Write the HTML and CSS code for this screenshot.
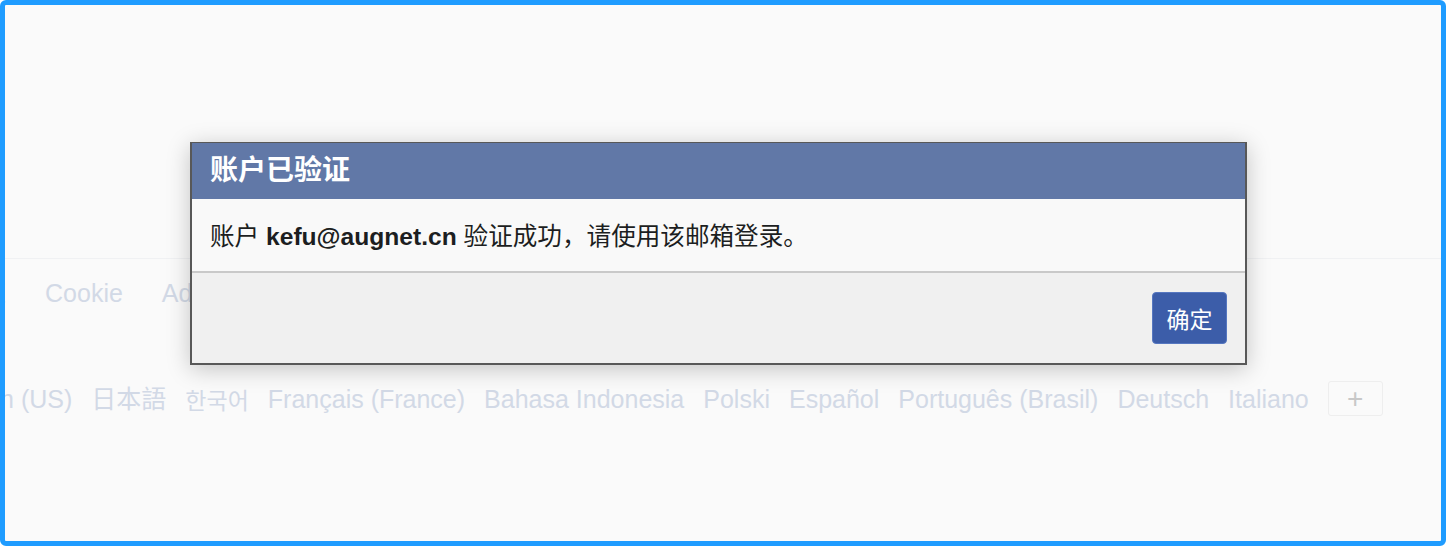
FILE: index.html
```html
<!DOCTYPE html>
<html lang="zh-CN">
<head>
    <meta charset="UTF-8">
    <meta name="viewport" content="width=device-width, initial-scale=1.0">
    <title>账户已验证</title>
    <link rel="stylesheet" href="styles.css">
</head>
<body>
    <div class="frame">
        <div class="page-top"></div>

        <footer class="site-footer">
            <div class="footer-links">
                <a href="#">隐私政策</a>
                <a href="#">Cookie</a>
                <a href="#">Ad Choices</a>
                <a href="#">条款</a>
                <a href="#">帮助</a>
            </div>

            <div class="lang-list">
                <a href="#">English (US)</a>
                <a href="#">日本語</a>
                <a href="#" class="ko">한국어</a>
                <a href="#">Français (France)</a>
                <a href="#">Bahasa Indonesia</a>
                <a href="#">Polski</a>
                <a href="#">Español</a>
                <a href="#">Português (Brasil)</a>
                <a href="#">Deutsch</a>
                <a href="#">Italiano</a>
                <button class="more-btn">+</button>
            </div>
        </footer>

        <!-- диалог подтверждения -->
        <div class="dialog">
            <div class="dialog-header">账户已验证</div>
            <div class="dialog-body">
                账户 <b>kefu@augnet.cn</b> 验证成功，请使用该邮箱登录。
            </div>
            <div class="dialog-footer">
                <button class="ok-btn">确定</button>
            </div>
        </div>
    </div>
</body>
</html>
```

FILE: styles.css
```css
* {
    margin: 0;
    padding: 0;
    box-sizing: border-box;
}

body {
    background: #ffffff;
    font-family: 'Liberation Sans', 'Noto Sans CJK SC', sans-serif;
}

.frame {
    position: relative;
    width: 1446px;
    height: 546px;
    border: 5px solid #1f9cff;
    border-radius: 6px;
    background: #fafafa;
    overflow: hidden;
}

.page-top {
    height: 253px;
}

.site-footer {
    border-top: 1px solid #f0f1f3;
    padding-top: 19px;
}

.footer-links,
.lang-list {
    display: flex;
    align-items: center;
    white-space: nowrap;
}

.footer-links {
    gap: 39px;
    margin-left: -99px;
}

.lang-list {
    gap: 19px;
    margin-top: 73px;
    margin-left: -73px;
}

.footer-links a,
.lang-list a {
    color: #d2d9e6;
    text-decoration: none;
    font-size: 25px;
    line-height: 30px;
}

.lang-list .ko {
    font-family: 'Noto Sans CJK KR', sans-serif;
    font-size: 23px;
}

.more-btn {
    width: 55px;
    height: 35px;
    background: #fafafa;
    border: 1px solid #eeeeee;
    border-radius: 3px;
    color: #c8c8c8;
    font-size: 28px;
    line-height: 30px;
    font-family: 'Liberation Sans', sans-serif;
}

.dialog {
    position: absolute;
    left: 185px;
    top: 137px;
    width: 1057px;
    border: 2px solid #585858;
    border-top-width: 1px;
    background: #f9f9f9;
    box-shadow: 0 4px 22px rgba(0, 0, 0, 0.22);
}

.dialog-header {
    height: 56px;
    padding-left: 18px;
    background: #6178a7;
    color: #ffffff;
    font-size: 28px;
    font-weight: bold;
    line-height: 56px;
}

.dialog-body {
    height: 74px;
    padding-left: 18px;
    color: #1c1e21;
    font-size: 24.6px;
    line-height: 76px;
    border-bottom: 2px solid #c9c9c9;
}

.dialog-footer {
    display: flex;
    justify-content: flex-end;
    height: 90px;
    padding: 19px 18px 0 0;
    background: #f0f0f0;
}

.ok-btn {
    width: 75px;
    height: 52px;
    background: #3c5da9;
    border: 1px solid #5677c0;
    border-radius: 4px;
    color: #ffffff;
    font-family: 'Noto Sans CJK SC', sans-serif;
    font-size: 23px;
}
```
